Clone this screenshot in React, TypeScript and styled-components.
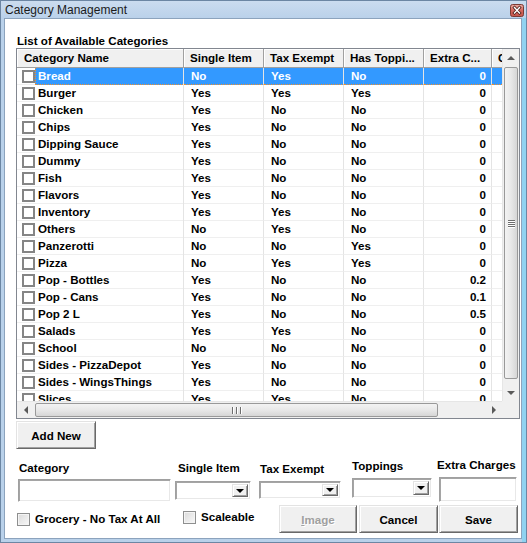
import React from 'react';
import styled, { createGlobalStyle, css } from 'styled-components';

const FONT = `"Liberation Sans", Arial, sans-serif`;
const COLS = '167px 80px 80px 80px 68px 80px';

const GlobalStyle = createGlobalStyle`
  html, body { margin: 0; padding: 0; }
  body { width: 527px; height: 543px; overflow: hidden; background: #fff; font-family: ${FONT}; }
  *, *::before, *::after { box-sizing: border-box; }
`;

const Window = styled.div`
  width: 527px;
  height: 543px;
  display: flex;
  flex-direction: column;
  border: 1px solid #6c86a3;
  background: #b9d1ea;
`;

const TitleBar = styled.div`
  height: 17px;
  flex: none;
  display: flex;
  align-items: flex-start;
  justify-content: space-between;
  padding: 0 2px 0 4px;
  background: linear-gradient(#cbdcef, #bad1ea);
`;

const TitleText = styled.span`
  font-size: 12px;
  line-height: 17px;
  padding-top: 1px;
  color: #1b1b1b;
`;

const CloseBox = styled.div`
  margin-top: 3px;
  width: 14px;
  height: 13px;
  display: flex;
`;

const Frame = styled.div`
  flex: 1;
  min-height: 0;
  display: flex;
  padding: 0 0 3px 3px;
  border-right: 4px solid #8fd2f0;
`;

const Client = styled.div`
  flex: 1;
  display: flex;
  flex-direction: column;
  background: #fff;
  border: 1px solid #8ca3bd;
  padding-top: 15px;
`;

const Bold = css`
  font-family: ${FONT};
  font-weight: bold;
  font-size: 11.6px;
  color: #000;
`;

const GroupLabel = styled.div`
  ${Bold};
  margin-left: 12px;
  height: 14px;
  line-height: 14px;
`;

const GridBox = styled.div`
  margin-left: 11px;
  width: 504px;
  height: 371px;
  flex: none;
  border: 1px solid #828790;
  display: grid;
  grid-template-columns: 485px 17px;
  grid-template-rows: 352px 17px;
`;

const Viewport = styled.div`
  grid-area: 1 / 1;
  overflow: hidden;
  background: #fff;
`;

const HeaderRow = styled.div`
  display: grid;
  grid-template-columns: ${COLS};
  height: 19px;
`;

const HeaderCell = styled.div<{ $pl?: number }>`
  ${Bold};
  background: #f0f0f0;
  border-right: 1px solid #a0a0a0;
  border-bottom: 1px solid #a0a0a0;
  box-shadow: inset 1px 1px #fff;
  padding-left: ${(p) => p.$pl ?? 6}px;
  line-height: 18px;
  white-space: nowrap;
  overflow: hidden;
`;

const Row = styled.div`
  display: grid;
  grid-template-columns: ${COLS};
  height: 17px;
`;

const Cell = styled.div<{ $sel?: boolean; $right?: boolean }>`
  ${Bold};
  height: 17px;
  line-height: 16px;
  white-space: nowrap;
  overflow: hidden;
  border-right: 1px solid #e4e4e4;
  border-bottom: 1px solid #efefef;
  padding-left: 7px;
  ${(p) =>
    p.$right &&
    css`
      text-align: right;
      padding-left: 0;
      padding-right: 5px;
    `}
  ${(p) =>
    p.$sel &&
    css`
      background: #3399ff;
      color: #fff;
      border-bottom: 1px dotted #f0902c;
    `}
`;

const NameCell = styled.div`
  display: flex;
  height: 17px;
  border-right: 1px solid #e4e4e4;
`;

const CheckArea = styled.div`
  width: 18px;
  flex: none;
  padding-left: 5px;
  display: flex;
  align-items: center;
  border-bottom: 1px solid #efefef;
`;

const NameArea = styled.div<{ $sel?: boolean }>`
  ${Bold};
  flex: 1;
  min-width: 0;
  padding-left: 3px;
  line-height: 16px;
  white-space: nowrap;
  overflow: hidden;
  border-bottom: 1px solid #efefef;
  ${(p) =>
    p.$sel &&
    css`
      background: #3399ff;
      color: #fff;
      padding-left: 2px;
      border-left: 1px dotted #f0902c;
      border-bottom: 1px dotted #f0902c;
    `}
`;

const GridCheck = styled.span`
  width: 13px;
  height: 13px;
  border: 2px solid #858585;
  background: #fff;
`;

const VScroll = styled.div`
  grid-area: 1 / 2;
  display: flex;
  flex-direction: column;
  background: #f0f0f0;
  border-left: 1px solid #e6e6e6;
`;

const HScroll = styled.div`
  grid-area: 2 / 1;
  display: flex;
  background: #f0f0f0;
  border-top: 1px solid #e6e6e6;
`;

const Corner = styled.div`
  grid-area: 2 / 2;
  background: #f0f0f0;
`;

const ArrowBtn = styled.div<{ $h?: boolean }>`
  flex: none;
  width: ${(p) => (p.$h ? '17px' : '100%')};
  height: ${(p) => (p.$h ? '100%' : '17px')};
  display: flex;
  align-items: center;
  justify-content: center;
`;

type Dir = 'up' | 'down' | 'left' | 'right';

const Tri = styled.span<{ $dir: Dir; $c?: string }>`
  width: 0;
  height: 0;
  ${(p) => {
    const c = p.$c ?? '#5a5a5a';
    switch (p.$dir) {
      case 'up':
        return css`border-left: 4px solid transparent; border-right: 4px solid transparent; border-bottom: 4px solid ${c};`;
      case 'down':
        return css`border-left: 4px solid transparent; border-right: 4px solid transparent; border-top: 4px solid ${c};`;
      case 'left':
        return css`border-top: 4px solid transparent; border-bottom: 4px solid transparent; border-right: 4px solid ${c};`;
      default:
        return css`border-top: 4px solid transparent; border-bottom: 4px solid transparent; border-left: 4px solid ${c};`;
    }
  }}
`;

const Thumb = styled.div<{ $h?: boolean; $len: number; $start: number }>`
  flex: none;
  display: flex;
  align-items: center;
  justify-content: center;
  gap: 1px;
  border: 1px solid #999;
  border-radius: 2px;
  ${(p) =>
    p.$h
      ? css`
          width: ${p.$len}px;
          margin: 1px 0 1px ${p.$start}px;
          background: linear-gradient(#f3f3f3, #e8e8e8 50%, #d6d6d6);
        `
      : css`
          height: ${p.$len}px;
          flex-direction: column;
          margin: ${p.$start}px 1px 0 1px;
          background: linear-gradient(to right, #f3f3f3, #e8e8e8 50%, #d6d6d6);
        `}
`;

const Grip = styled.span<{ $h?: boolean }>`
  ${(p) =>
    p.$h
      ? css`width: 1px; height: 7px; border-left: 1px solid #6d6d6d; box-shadow: 1px 0 #fff;`
      : css`width: 7px; height: 1px; border-top: 1px solid #6d6d6d; box-shadow: 0 1px #fff;`}
  margin: 0 1px;
`;

const Spacer = styled.div`
  flex: 1;
`;

const raised = css`
  background: #f0f0f0;
  border: 1px solid;
  border-color: #e3e3e3 #696969 #696969 #e3e3e3;
  box-shadow: inset 1px 1px #fff, inset -1px -1px #a0a0a0;
`;

const sunken = css`
  background: #fff;
  border: 1px solid;
  border-color: #a0a0a0 #fff #fff #a0a0a0;
  box-shadow: inset 1px 1px #a5a5a5, inset -1px -1px #e8e8e8;
`;

const Button = styled.button<{ $w: number; $ml?: number }>`
  ${Bold};
  ${raised};
  width: ${(p) => p.$w}px;
  height: 28px;
  margin-left: ${(p) => p.$ml ?? 0}px;
  padding: 0;
  flex: none;
  &:disabled {
    color: #a0a0a0;
    text-shadow: 1px 1px #fff;
  }
`;

const AddButton = styled(Button)`
  margin-left: 11px;
  margin-top: 2px;
`;

const FormRow = styled.div`
  margin-top: 9px;
  margin-left: 13px;
  height: 45px;
  flex: none;
  display: flex;
  align-items: flex-start;
`;

const Field = styled.div<{ $ml: number; $w: number; $top: number }>`
  display: flex;
  flex-direction: column;
  flex: none;
  margin-left: ${(p) => p.$ml}px;
  width: ${(p) => p.$w}px;
  padding-top: ${(p) => p.$top}px;
`;

const FieldLabel = styled.div<{ $lx: number; $gap: number }>`
  ${Bold};
  line-height: 14px;
  height: 14px;
  white-space: nowrap;
  margin-left: ${(p) => p.$lx}px;
  margin-bottom: ${(p) => p.$gap}px;
`;

const TextBox = styled.input<{ $h: number }>`
  ${sunken};
  width: 100%;
  height: ${(p) => p.$h}px;
  padding: 0 3px;
  font-family: ${FONT};
  outline: none;
`;

const Combo = styled.div<{ $h: number }>`
  ${sunken};
  width: 100%;
  height: ${(p) => p.$h}px;
  display: flex;
  justify-content: flex-end;
  padding: 2px;
`;

const DropBtn = styled.div`
  ${raised};
  width: 16px;
  height: 100%;
  display: flex;
  align-items: center;
  justify-content: center;
`;

const BottomRow = styled.div`
  margin-top: 2px;
  height: 28px;
  flex: none;
  display: flex;
  align-items: flex-start;
  padding: 0 3px 0 12px;
`;

const CheckItem = styled.label<{ $top: number; $w?: number }>`
  ${Bold};
  display: flex;
  align-items: center;
  gap: 5px;
  height: 14px;
  line-height: 14px;
  flex: none;
  margin-top: ${(p) => p.$top}px;
  ${(p) => p.$w && css`width: ${p.$w}px;`}
  white-space: nowrap;
`;

const SmallCheck = styled.span`
  width: 13px;
  height: 13px;
  flex: none;
  border: 1px solid #8e8f8f;
  background: linear-gradient(135deg, #dadada, #f8f8f8);
  box-shadow: inset 0 0 0 1px #f4f4f4;
`;

const ButtonGroup = styled.div`
  margin-left: auto;
  display: flex;
`;

type Cat = [string, string, string, string, string];

const rows: Cat[] = [
  ['Bread', 'No', 'Yes', 'No', '0'],
  ['Burger', 'Yes', 'Yes', 'Yes', '0'],
  ['Chicken', 'Yes', 'No', 'No', '0'],
  ['Chips', 'Yes', 'No', 'No', '0'],
  ['Dipping Sauce', 'Yes', 'No', 'No', '0'],
  ['Dummy', 'Yes', 'No', 'No', '0'],
  ['Fish', 'Yes', 'No', 'No', '0'],
  ['Flavors', 'Yes', 'No', 'No', '0'],
  ['Inventory', 'Yes', 'Yes', 'No', '0'],
  ['Others', 'No', 'Yes', 'No', '0'],
  ['Panzerotti', 'No', 'No', 'Yes', '0'],
  ['Pizza', 'No', 'Yes', 'Yes', '0'],
  ['Pop - Bottles', 'Yes', 'No', 'No', '0.2'],
  ['Pop - Cans', 'Yes', 'No', 'No', '0.1'],
  ['Pop 2 L', 'Yes', 'No', 'No', '0.5'],
  ['Salads', 'Yes', 'Yes', 'No', '0'],
  ['School', 'No', 'No', 'No', '0'],
  ['Sides - PizzaDepot', 'Yes', 'No', 'No', '0'],
  ['Sides - WingsThings', 'Yes', 'No', 'No', '0'],
  ['Slices', 'Yes', 'Yes', 'No', '0'],
];

const CloseIcon = () => (
  <svg width="14" height="13" viewBox="0 0 14 13">
    <defs>
      <linearGradient id="closeGrad" x1="0" y1="0" x2="0" y2="1">
        <stop offset="0" stopColor="#e9aaa2" />
        <stop offset="0.5" stopColor="#d4675e" />
        <stop offset="1" stopColor="#c4554b" />
      </linearGradient>
    </defs>
    <rect x="0.5" y="0.5" width="13" height="12" rx="2" fill="url(#closeGrad)" stroke="#7b3a33" />
    <path d="M4.5 3.5 L9.5 9 M9.5 3.5 L4.5 9" stroke="#4a1d18" strokeWidth="3" strokeLinecap="square" />
    <path d="M4.5 3.5 L9.5 9 M9.5 3.5 L4.5 9" stroke="#fff" strokeWidth="1.4" strokeLinecap="square" />
  </svg>
);

export default function App() {
  return (
    <>
      <GlobalStyle />
      <Window>
        <TitleBar>
          <TitleText>Category Management</TitleText>
          <CloseBox>
            <CloseIcon />
          </CloseBox>
        </TitleBar>
        <Frame>
          <Client>
            <GroupLabel>List of Available Categories</GroupLabel>
            <GridBox>
              <Viewport>
                <HeaderRow>
                  <HeaderCell $pl={7}>Category Name</HeaderCell>
                  <HeaderCell>Single Item</HeaderCell>
                  <HeaderCell>Tax Exempt</HeaderCell>
                  <HeaderCell>Has Toppi...</HeaderCell>
                  <HeaderCell>Extra C...</HeaderCell>
                  <HeaderCell>C</HeaderCell>
                </HeaderRow>
                {rows.map((r, i) => {
                  const sel = i === 0;
                  return (
                    <Row key={r[0]}>
                      <NameCell>
                        <CheckArea>
                          <GridCheck />
                        </CheckArea>
                        <NameArea $sel={sel}>{r[0]}</NameArea>
                      </NameCell>
                      <Cell $sel={sel}>{r[1]}</Cell>
                      <Cell $sel={sel}>{r[2]}</Cell>
                      <Cell $sel={sel}>{r[3]}</Cell>
                      <Cell $sel={sel} $right>
                        {r[4]}
                      </Cell>
                      <Cell $sel={sel} />
                    </Row>
                  );
                })}
              </Viewport>
              <VScroll>
                <ArrowBtn>
                  <Tri $dir="up" />
                </ArrowBtn>
                <Thumb $len={312} $start={1}>
                  <Grip />
                  <Grip />
                  <Grip />
                  <Grip />
                </Thumb>
                <Spacer />
                <ArrowBtn>
                  <Tri $dir="down" />
                </ArrowBtn>
              </VScroll>
              <HScroll>
                <ArrowBtn $h>
                  <Tri $dir="left" />
                </ArrowBtn>
                <Thumb $h $len={403} $start={1}>
                  <Grip $h />
                  <Grip $h />
                  <Grip $h />
                </Thumb>
                <Spacer />
                <ArrowBtn $h>
                  <Tri $dir="right" />
                </ArrowBtn>
              </HScroll>
              <Corner />
            </GridBox>
            <AddButton $w={80}>Add New</AddButton>
            <FormRow>
              <Field $ml={0} $w={153} $top={3}>
                <FieldLabel $lx={1} $gap={4}>Category</FieldLabel>
                <TextBox $h={23} readOnly />
              </Field>
              <Field $ml={4} $w={76} $top={3}>
                <FieldLabel $lx={3} $gap={6}>Single Item</FieldLabel>
                <Combo $h={19}>
                  <DropBtn>
                    <Tri $dir="down" $c="#000" />
                  </DropBtn>
                </Combo>
              </Field>
              <Field $ml={8} $w={82} $top={4}>
                <FieldLabel $lx={1} $gap={5}>Tax Exempt</FieldLabel>
                <Combo $h={18}>
                  <DropBtn>
                    <Tri $dir="down" $c="#000" />
                  </DropBtn>
                </Combo>
              </Field>
              <Field $ml={11} $w={80} $top={1}>
                <FieldLabel $lx={0} $gap={5}>Toppings</FieldLabel>
                <Combo $h={20}>
                  <DropBtn>
                    <Tri $dir="down" $c="#000" />
                  </DropBtn>
                </Combo>
              </Field>
              <Field $ml={7} $w={78} $top={0}>
                <FieldLabel $lx={-2} $gap={5}>Extra Charges</FieldLabel>
                <TextBox $h={25} readOnly />
              </Field>
            </FormRow>
            <BottomRow>
              <CheckItem $top={7} $w={166}>
                <SmallCheck />
                Grocery - No Tax At All
              </CheckItem>
              <CheckItem $top={5}>
                <SmallCheck />
                Scaleable
              </CheckItem>
              <ButtonGroup>
                <Button $w={78} disabled>
                  <u>I</u>mage
                </Button>
                <Button $w={79} $ml={2}>
                  Cancel
                </Button>
                <Button $w={79} $ml={1}>
                  Save
                </Button>
              </ButtonGroup>
            </BottomRow>
          </Client>
        </Frame>
      </Window>
    </>
  );
}
